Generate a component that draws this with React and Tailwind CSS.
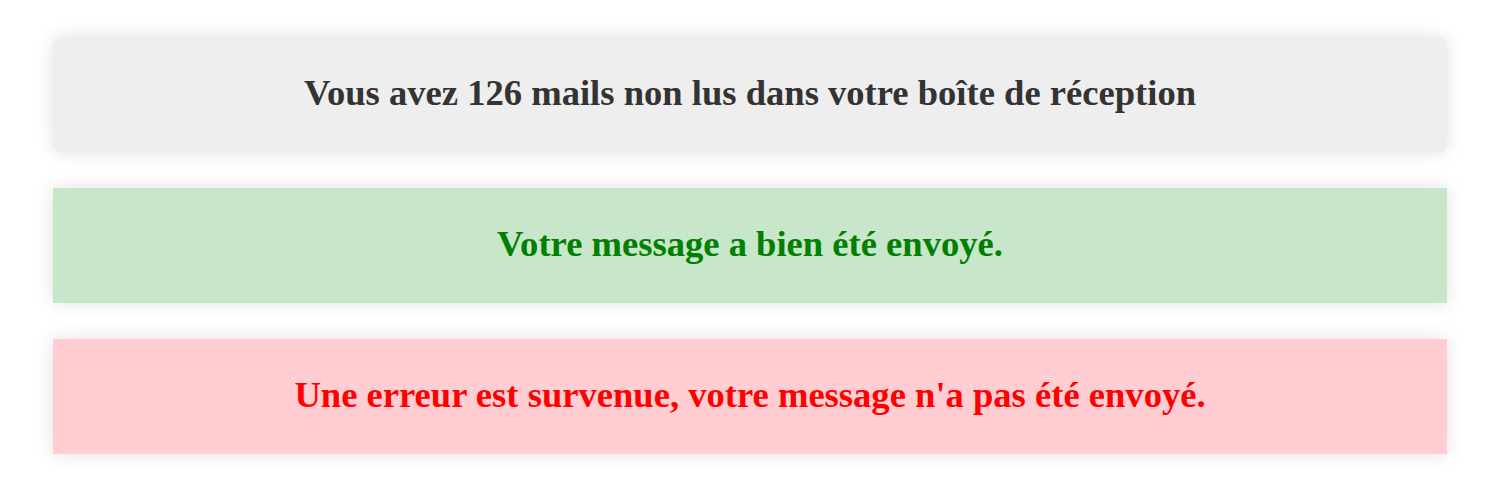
export default function App() {
  const boxes = [
    { text: 'Vous avez 126 mails non lus dans votre boîte de réception', cls: 'bg-[#eeeeee] text-[#333333] rounded-lg' },
    { text: 'Votre message a bien été envoyé.', cls: 'bg-[#c8e6c9] text-[#008000]' },
    { text: "Une erreur est survenue, votre message n'a pas été envoyé.", cls: 'bg-[#ffcdd2] text-[#ff0000]' },
  ]

  return (
    <div className="bg-white min-h-[493px] pt-[37px] px-[53px] flex flex-col gap-[36px] font-['Liberation_Serif',serif]">
      {boxes.map((b) => (
        <div
          key={b.text}
          className={`h-[115px] flex items-center justify-center font-bold text-[36.6px] leading-none pb-[2px] shadow-[0_0_18px_rgba(0,0,0,0.12)] ${b.cls}`}
        >
          {b.text}
        </div>
      ))}
    </div>
  )
}
